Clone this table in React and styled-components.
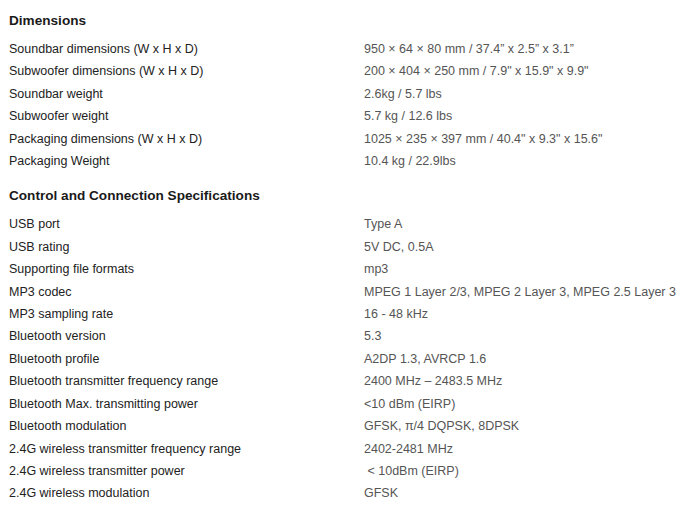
import React from 'react';
import styled, { createGlobalStyle } from 'styled-components';

const GlobalStyle = createGlobalStyle`
  body {
    margin: 0;
    background: #ffffff;
    font-family: "Liberation Sans", Arial, sans-serif;
  }
`;

const sections = [
    {
        title: 'Dimensions',
        rows: [
            ['Soundbar dimensions (W x H x D)', '950 × 64 × 80 mm / 37.4” x 2.5” x 3.1”'],
            ['Subwoofer dimensions (W x H x D)', '200 × 404 × 250 mm / 7.9" x 15.9" x 9.9"'],
            ['Soundbar weight', '2.6kg / 5.7 lbs'],
            ['Subwoofer weight', '5.7 kg / 12.6 lbs'],
            ['Packaging dimensions (W x H x D)', '1025 × 235 × 397 mm / 40.4" x 9.3" x 15.6"'],
            ['Packaging Weight', '10.4 kg / 22.9lbs'],
        ],
    },
    {
        title: 'Control and Connection Specifications',
        rows: [
            ['USB port', 'Type A'],
            ['USB rating', '5V DC, 0.5A'],
            ['Supporting file formats', 'mp3'],
            ['MP3 codec', 'MPEG 1 Layer 2/3, MPEG 2 Layer 3, MPEG 2.5 Layer 3'],
            ['MP3 sampling rate', '16 - 48 kHz'],
            ['Bluetooth version', '5.3'],
            ['Bluetooth profile', 'A2DP 1.3, AVRCP 1.6'],
            ['Bluetooth transmitter frequency range', '2400 MHz – 2483.5 MHz'],
            ['Bluetooth Max. transmitting power', '<10 dBm (EIRP)'],
            ['Bluetooth modulation', 'GFSK, π/4 DQPSK, 8DPSK'],
            ['2.4G wireless transmitter frequency range', '2402-2481 MHz'],
            ['2.4G wireless transmitter power', '\u00a0< 10dBm (EIRP)'],
            ['2.4G wireless modulation', 'GFSK'],
        ],
    },
];

const SpecsPage = () => (
    <SpecsWrapper>
        <GlobalStyle />
        {sections.map(section => (
            <Section key={section.title}>
                <SectionTitle>{section.title}</SectionTitle>
                <SpecList>
                    {section.rows.map(([label, value]) => (
                        <SpecRow key={label}>
                            <SpecLabel>{label}</SpecLabel>
                            <SpecValue>{value}</SpecValue>
                        </SpecRow>
                    ))}
                </SpecList>
            </Section>
        ))}
    </SpecsWrapper>
);

const SpecsWrapper = styled.div`
  display: flex;
  flex-direction: column;
  gap: 13px;
  padding: 10px 9px 0;
`;

const Section = styled.section`
  display: flex;
  flex-direction: column;
  gap: 6px;
`;

const SectionTitle = styled.h3`
  margin: 0;
  font-size: 13.6px;
  line-height: 22px;
  font-weight: 700;
  color: #1a1a1a;
`;

const SpecList = styled.div`
  display: flex;
  flex-direction: column;
`;

const SpecRow = styled.div`
  display: grid;
  grid-template-columns: 355px 1fr;
  font-size: 12.5px;
  line-height: 22.4px;
`;

const SpecLabel = styled.span`
  color: #222222;
`;

const SpecValue = styled.span`
  color: #555555;
`;

export default SpecsPage;
